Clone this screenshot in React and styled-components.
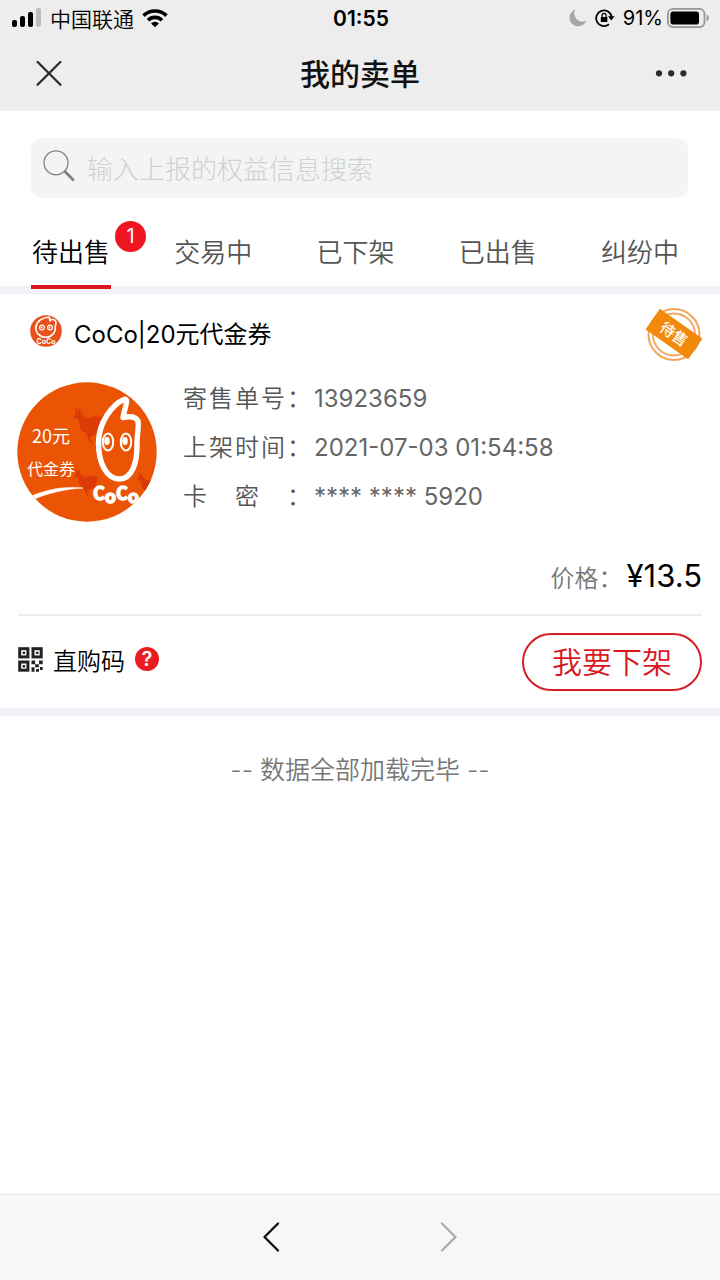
import React from "react";
import styled, { createGlobalStyle } from "styled-components";

const Global = createGlobalStyle`
  * { box-sizing: border-box; }
  body {
    margin: 0;
    background: #fff;
    color: #111;
    font-family: Inter, "Noto Sans CJK SC", sans-serif;
    -webkit-font-smoothing: antialiased;
  }
  button, input { font: inherit; color: inherit; }
  svg { display: block; flex: none; }
`;

const Page = styled.div`
  min-height: 100vh;
  display: flex;
  flex-direction: column;
`;

const TopArea = styled.header`
  background: #ededed;
`;

const StatusBar = styled.div`
  display: grid;
  grid-template-columns: 1fr auto 1fr;
  align-items: center;
  height: 36px;
  padding: 0 10px 0 12px;
  font-size: 20px;
  color: #000;
`;

const StatusGroup = styled.div`
  display: flex;
  align-items: center;
  gap: 8px;
  justify-content: ${(p) => (p.$end ? "flex-end" : "flex-start")};
`;

const Carrier = styled.span`
  font-size: 21px;
  font-weight: 350;
`;

const Clock = styled.time`
  font-size: 21px;
  font-weight: 600;
`;

const Level = styled.span`
  display: flex;
  align-items: center;
  gap: 4px;
`;

const NavBar = styled.div`
  display: grid;
  grid-template-columns: 1fr auto 1fr;
  align-items: center;
  height: 75px;
  padding: 0 32px;
`;

const NavTitle = styled.h1`
  margin: 0;
  font-size: 30px;
  line-height: 40px;
  font-weight: 500;
`;

const IconButton = styled.button`
  display: flex;
  padding: 0;
  border: 0;
  background: none;
  color: ${(p) => p.$color || "#2a2a2a"};
  justify-self: ${(p) => p.$side || "start"};
`;

const SearchBox = styled.label`
  display: flex;
  align-items: center;
  gap: 12px;
  height: 60px;
  margin: 27px 32px 0 31px;
  padding: 0 12px;
  border-radius: 12px;
  background: #f4f4f4;
`;

const SearchInput = styled.input`
  flex: 1;
  min-width: 0;
  padding: 2px 0 0;
  border: 0;
  outline: 0;
  background: none;
  font-size: 26px;
  font-weight: 300;
  &::placeholder { color: #d0d0d0; opacity: 1; }
`;

const Tabs = styled.nav`
  display: flex;
  justify-content: space-between;
  padding: 20px 40px 0 31px;
  border-bottom: 8px solid #f0f0f6;
`;

const Tab = styled.a`
  position: relative;
  width: 80px;
  height: 68px;
  font-size: 26px;
  font-weight: 350;
  line-height: 70px;
  text-align: center;
  white-space: nowrap;
  text-decoration: none;
  color: ${(p) => (p.$active ? "#000" : "#555")};
  &::after {
    content: "";
    position: absolute;
    inset: auto 0 -3px;
    height: 4px;
    background: ${(p) => (p.$active ? "#d9161f" : "transparent")};
  }
`;

const Badge = styled.span`
  position: absolute;
  top: 3px;
  right: -35px;
  width: 31px;
  height: 31px;
  border-radius: 50%;
  background: #ee1620;
  color: #fff;
  font-size: 20px;
  font-weight: 400;
  line-height: 31px;
`;

const Order = styled.article`
  padding: 14px 18px 17px;
  border-bottom: 8px solid #f0f0f6;
`;

const OrderHead = styled.div`
  display: flex;
  align-items: center;
  gap: 12px;
  padding-left: 12px;
`;

const Brand = styled.svg`
  margin-bottom: 8px;
`;

const OrderTitle = styled.h2`
  flex: 1;
  margin: 0;
  font-size: 24px;
  line-height: 36px;
  font-weight: 400;
  color: #000;
`;

const OrderBody = styled.div`
  display: flex;
  gap: 26px;
  margin-top: 12px;
`;

const Voucher = styled.svg`
  margin-top: 8px;
  margin-left: -1px;
`;

const Details = styled.dl`
  margin: 0;
  font-size: 24px;
  line-height: 49px;
  color: #666;
`;

const Detail = styled.div`
  display: flex;
  gap: 3px;
`;

const Term = styled.dt`
  width: 128px;
  font-weight: 350;
  color: #555;
  text-align: justify;
  text-align-last: justify;
`;

const Value = styled.dd`
  margin: 0;
`;

const PriceRow = styled.div`
  display: flex;
  align-items: center;
  justify-content: flex-end;
  gap: 4px;
  padding: 34px 0 18px;
  border-bottom: 2px solid #ececec;
`;

const PriceLabel = styled.span`
  font-size: 24px;
  font-weight: 350;
  color: #777;
`;

const Price = styled.strong`
  font-size: 31px;
  line-height: 40px;
  font-weight: 400;
  color: #000;
`;

const OrderFoot = styled.div`
  display: flex;
  align-items: center;
  justify-content: space-between;
  padding-top: 17px;
`;

const DirectCode = styled.div`
  display: flex;
  align-items: center;
  gap: 10px;
  margin-bottom: 6px;
  font-size: 24px;
  font-weight: 350;
  color: #000;
`;

const HelpButton = styled.button`
  width: 24px;
  height: 24px;
  padding: 0;
  border: 0;
  border-radius: 50%;
  background: #ea1c20;
  color: #fff;
  font-size: 20px;
  line-height: 24px;
  font-weight: 600;
`;

const Withdraw = styled.button`
  width: 180px;
  height: 58px;
  padding: 0;
  border: 2px solid #d42026;
  border-radius: 29px;
  background: #fff;
  color: #d9161f;
  font-size: 30px;
  font-weight: 350;
  line-height: 40px;
`;

const EndNote = styled.p`
  flex: 1;
  margin: 36px 0 0;
  font-size: 25px;
  font-weight: 350;
  line-height: 36px;
  text-align: center;
  color: #777;
`;

const BottomBar = styled.footer`
  display: flex;
  justify-content: center;
  gap: 152px;
  height: 86px;
  padding-top: 27px;
  border-top: 1px solid #e6e6e6;
  background: #f7f7f7;
`;

const TABS = ["待出售", "交易中", "已下架", "已出售", "纠纷中"];

const DETAILS = [
  ["寄售单号：", "13923659"],
  ["上架时间：", "2021-07-03 01:54:58"],
  ["卡　密　：", "**** **** 5920"],
];

const SignalIcon = () => (
  <svg width="30" height="20" viewBox="0 0 30 20" aria-hidden="true">
    <rect x="0" y="12" width="5" height="7" rx="2" />
    <rect x="8" y="8" width="5" height="11" rx="2" />
    <rect x="16" y="4" width="5" height="15" rx="2" />
    <rect x="24" y="0" width="5" height="19" rx="2" fill="#bdbdbd" />
  </svg>
);

const WifiIcon = () => (
  <svg width="26" height="20" viewBox="0 0 26 20" aria-hidden="true">
    <path d="M1.5 7.6a16.5 16.5 0 0 1 23 0M6 12.2a10 10 0 0 1 14 0" fill="none" stroke="#000" strokeWidth="3.6" />
    <path d="M13 19.3 9 15.4a5.8 5.8 0 0 1 8 0Z" />
  </svg>
);

const MoonIcon = () => (
  <svg width="18" height="18" viewBox="0 0 18 18" aria-hidden="true">
    <path d="M6.2.6A8.6 8.6 0 1 0 17.2 11.8 8.3 8.3 0 0 1 6.2.6Z" fill="#a6a6a6" />
  </svg>
);

const RotationLockIcon = () => (
  <svg width="20" height="18" viewBox="0 0 20 18" aria-hidden="true">
    <path d="M14 15.2A7.8 7.8 0 1 1 16.7 8" fill="none" stroke="#000" strokeWidth="1.8" />
    <path d="M13 7.2h6.6l-3.3 4.3Z" />
    <rect x="5.8" y="8" width="6.6" height="5" rx=".6" />
    <path d="M7.1 8V6.4a2 2 0 0 1 4 0V8" fill="none" stroke="#000" strokeWidth="1.3" />
  </svg>
);

const BatteryIcon = () => (
  <svg width="43" height="20" viewBox="0 0 43 20" aria-hidden="true">
    <rect x=".9" y=".9" width="36.6" height="18.2" rx="5" fill="none" stroke="#979797" strokeWidth="1.8" />
    <rect x="3.4" y="3.4" width="28.6" height="13.2" rx="2.8" />
    <path d="M39.6 6.5c3 1.4 3 5.6 0 7Z" fill="#979797" />
  </svg>
);

const CloseIcon = () => (
  <svg width="34" height="26" viewBox="-4 0 34 26" fill="none" stroke="currentColor" strokeWidth="2.3" strokeLinecap="round">
    <path d="m1.6 1 22.8 22.8M24.4 1 1.6 23.8" />
  </svg>
);

const MoreIcon = () => (
  <svg width="34" height="8" viewBox="0 0 34 8" fill="currentColor">
    <circle cx="5" cy="3.3" r="3.1" />
    <circle cx="17.2" cy="3.3" r="3.1" />
    <circle cx="29.4" cy="3.3" r="3.1" />
  </svg>
);

const SearchIcon = () => (
  <svg width="32" height="36" viewBox="0 0 32 36" fill="none" stroke="#808080" aria-hidden="true">
    <circle cx="13" cy="12.8" r="12" strokeWidth="1.3" />
    <path d="m21.2 20.8 9.6 9.6" strokeWidth="2.8" />
  </svg>
);

const QrIcon = () => (
  <svg width="25" height="25" viewBox="0 0 25 25" fill="#222" aria-hidden="true">
    <g fill="none" stroke="#222" strokeWidth="3">
      <rect x="1.7" y="1.7" width="8.2" height="8.2" />
      <rect x="15" y="1.7" width="8.2" height="8.2" />
      <rect x="1.7" y="15" width="8.2" height="8.2" />
    </g>
    <path d="M4.7 4.7h2.4v2.4H4.700zM18 4.7h2.4v2.4H18zM4.700 18h2.4v2.4H4.700zM13.500 13.500h3.600v3.800h-3.600zM17.100 17.300h3.800v3h-3.800zM21 13.500h3.700v3.800H21zM13.500 20.300h3v4.400h-3zM18 22h3v2.700h-3zM22 20h2.700v3H22z" />
  </svg>
);

const Mascot = () => (
  <g>
    <path
      d="M107 17.5C96 22 81.500 40 81.500 61c0 20 8 36 21 36 12 0 18-15 17.500-36 0-8 2-15 1-22-2-4-8-5-15-3.500C107 29 110 22 109.500 18.500q-.5-2-2.500-1Z"
      fill="none"
      stroke="#fff"
      strokeWidth="5.4"
      strokeLinejoin="round"
    />
    <ellipse cx="91" cy="60" rx="5.2" ry="8.6" fill="none" stroke="#fff" strokeWidth="2" />
    <ellipse cx="109" cy="60" rx="5.2" ry="8.6" fill="none" stroke="#fff" strokeWidth="2" />
    <ellipse cx="90" cy="59" rx="2.8" ry="4" fill="#fff" />
    <ellipse cx="108" cy="59" rx="2.8" ry="4" fill="#fff" />
  </g>
);

const BrandIcon = () => (
  <Brand width="32" height="32" viewBox="0 0 32 32" aria-hidden="true">
    <defs>
      <clipPath id="brand"><circle cx="16" cy="16" r="15.8" /></clipPath>
    </defs>
    <g clipPath="url(#brand)">
      <rect width="32" height="32" fill="#e9511c" />
      <path
        d="M19.500 2.200C13 2 7 6 6 11.500c-1 6 4 10.800 9.500 10.800S26 18 25.200 11.500c1-3 1-5 0-6-1.500-1.200-4-1.200-5.200.2-.8-1 0-2.600-.5-3.500Z"
        fill="none"
        stroke="#fff"
        strokeWidth="1.6"
      />
      <circle cx="12" cy="12.5" r="2.4" fill="none" stroke="#fff" strokeWidth="1.1" />
      <circle cx="20" cy="12.5" r="2.4" fill="none" stroke="#fff" strokeWidth="1.1" />
      <circle cx="11.6" cy="12.5" r=".9" fill="#fff" />
      <circle cx="19.6" cy="12.5" r=".9" fill="#fff" />
      <text x="16" y="29" textAnchor="middle" fontFamily="Inter, sans-serif" fontSize="7" fontWeight="700" fill="#fff">CoCo</text>
    </g>
  </Brand>
);

const Kangaroo = ({ at }) => (
  <path
    transform={at}
    d="m2 0 3 5 2-4 1 6c3 2 4 5 8 5 6-2 12-2 16 1l-4 12c-4 4-8 4-11 6l3 8-4-4-3-8c-6-2-7-8-7-13L0 11l3-4Z"
    fill="#dc3a06"
  />
);

const VoucherPicture = () => (
  <Voucher width="140" height="140" viewBox="0 0 140 140" role="img" aria-label="CoCo 20元代金券">
    <defs>
      <clipPath id="voucher"><circle cx="70" cy="70" r="69.7" /></clipPath>
    </defs>
    <g clipPath="url(#voucher)">
      <rect width="140" height="140" fill="#ea5404" />
      <Kangaroo at="translate(56 24)" />
      <Kangaroo at="translate(57 86) scale(.75)" />
      <Kangaroo at="translate(120 90) scale(.7)" />
      <path d="M12 115C30 107 48 104 66 106 48 107 31 111 15 118Z" fill="#fff" stroke="#fff" strokeWidth=".6" />
      <Mascot />
      <text x="34" y="61" textAnchor="middle" fontFamily='"Noto Sans CJK SC", sans-serif' fontSize="18" fill="#fff">20元</text>
      <text x="34" y="93" textAnchor="middle" fontFamily='"Noto Sans CJK SC", sans-serif' fontSize="16" fill="#fff">代金券</text>
      <text
        x="99"
        y="118"
        textAnchor="middle"
        fontFamily='"Noto Sans CJK SC", sans-serif'
        fontSize="18"
        fontWeight="700"
        fill="#fff"
        stroke="#fff"
        strokeWidth="1.4"
        strokeLinejoin="round"
      >
        C<tspan dy="3">o</tspan><tspan dy="-3">C</tspan><tspan dy="3">o</tspan>
      </text>
    </g>
  </Voucher>
);

const StampIcon = () => (
  <svg width="56" height="54" viewBox="0 0 56 54" role="img" aria-label="待售">
    <g fill="none" stroke="#f3a65a">
      <circle cx="28" cy="26.5" r="25.5" strokeWidth="2" />
      <circle cx="28" cy="26.5" r="21" strokeWidth="1.8" />
    </g>
    <g transform="rotate(35 28 26)">
      <rect x="2" y="13.5" width="52" height="25" fill="#f18a0c" />
      <text x="28" y="31.5" textAnchor="middle" fontFamily='"Noto Sans CJK SC", sans-serif' fontSize="15" fontWeight="500" fill="#fff">待售</text>
    </g>
  </svg>
);

const ArrowIcon = ({ d }) => (
  <svg width="24" height="30" viewBox="0 0 24 30" fill="none" stroke="currentColor" strokeWidth="2.3" strokeLinecap="round" strokeLinejoin="round">
    <path d={d} />
  </svg>
);

export default function App() {
  return (
    <Page>
      <Global />
      <TopArea>
        <StatusBar>
          <StatusGroup>
            <SignalIcon />
            <Carrier>中国联通</Carrier>
            <WifiIcon />
          </StatusGroup>
          <Clock>01:55</Clock>
          <StatusGroup $end>
            <MoonIcon />
            <RotationLockIcon />
            <Level>
              91%
              <BatteryIcon />
            </Level>
          </StatusGroup>
        </StatusBar>
        <NavBar>
          <IconButton aria-label="关闭"><CloseIcon /></IconButton>
          <NavTitle>我的卖单</NavTitle>
          <IconButton $side="end" aria-label="更多"><MoreIcon /></IconButton>
        </NavBar>
      </TopArea>

      <SearchBox>
        <SearchIcon />
        <SearchInput type="text" aria-label="搜索" placeholder="输入上报的权益信息搜索" />
      </SearchBox>

      <Tabs>
        {TABS.map((name, i) => (
          <Tab key={name} href="#" $active={i === 0}>
            {name}
            {i === 0 && <Badge>1</Badge>}
          </Tab>
        ))}
      </Tabs>

      <Order>
        <OrderHead>
          <BrandIcon />
          <OrderTitle>CoCo|20元代金券</OrderTitle>
          <StampIcon />
        </OrderHead>
        <OrderBody>
          <VoucherPicture />
          <Details>
            {DETAILS.map(([term, value]) => (
              <Detail key={term}>
                <Term>{term}</Term>
                <Value>{value}</Value>
              </Detail>
            ))}
          </Details>
        </OrderBody>
        <PriceRow>
          <PriceLabel>价格：</PriceLabel>
          <Price>¥13.5</Price>
        </PriceRow>
        <OrderFoot>
          <DirectCode>
            <QrIcon />
            直购码
            <HelpButton aria-label="直购码说明">?</HelpButton>
          </DirectCode>
          <Withdraw>我要下架</Withdraw>
        </OrderFoot>
      </Order>

      <EndNote>-- 数据全部加载完毕 --</EndNote>

      <BottomBar>
        <IconButton $color="#111" aria-label="后退"><ArrowIcon d="M18 1.5 4.5 15 18 28.5" /></IconButton>
        <IconButton $color="#adadad" aria-label="前进"><ArrowIcon d="M6 1.5 19.5 15 6 28.5" /></IconButton>
      </BottomBar>
    </Page>
  );
}
